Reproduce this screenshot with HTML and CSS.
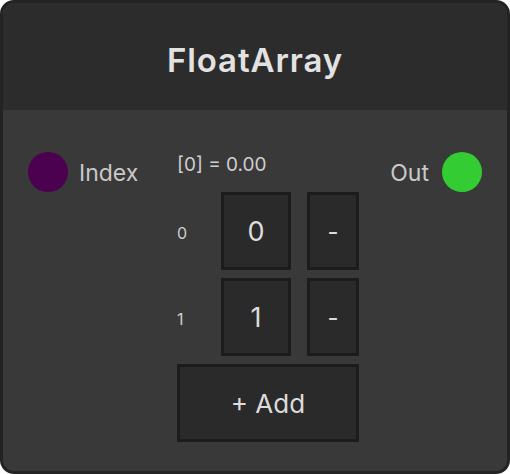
FILE: index.html
```html
<!DOCTYPE html>
<html>
<head>
<meta charset="utf-8">
<link rel="stylesheet" href="styles.css">
</head>
<body>
<div class="node">
  <div class="header">FloatArray</div>
  <div class="body">
    <div class="port port-in">
      <span class="dot dot-in"></span>
      <span class="port-label">Index</span>
    </div>
    <div class="middle">
      <div class="readout">[0] = 0.00</div>
      <div class="row">
        <span class="idx">0</span>
        <div class="box val">0</div>
        <div class="box minus">-</div>
      </div>
      <div class="row">
        <span class="idx">1</span>
        <div class="box val">1</div>
        <div class="box minus">-</div>
      </div>
      <div class="box add">+ Add</div>
    </div>
    <div class="port port-out">
      <span class="port-label">Out</span>
      <span class="dot dot-out"></span>
    </div>
  </div>
</div>
</body>
</html>
```
FILE: styles.css
```css
html, body {
  margin: 0;
  padding: 0;
  background: #ffffff;
}
body {
  font-family: Inter, "Noto Sans", sans-serif;
}
.node {
  width: 510px;
  height: 474px;
  box-sizing: border-box;
  border: 3px solid #232323;
  border-radius: 14px;
  background: #393939;
  overflow: hidden;
  display: flex;
  flex-direction: column;
}
.header {
  height: 107px;
  flex: none;
  background: #2c2c2c;
  color: #e2e2e2;
  font-size: 33px;
  font-weight: 600;
  letter-spacing: 0.9px;
  display: flex;
  align-items: center;
  justify-content: center;
  padding-top: 7px;
  box-sizing: border-box;
}
.body {
  flex: 1;
  display: grid;
  grid-template-columns: 149px 182px 1fr;
  align-items: start;
  padding: 42px 25px 0 25px;
}
.port {
  display: flex;
  align-items: center;
  height: 40px;
  gap: 11px;
}
.port-out {
  gap: 13px;
  justify-self: end;
}
.dot {
  width: 40px;
  height: 40px;
  border-radius: 50%;
  flex: none;
}
.dot-in { background: #4b0050; }
.dot-out { background: #33cc33; }
.port-label {
  color: #c9c9c9;
  font-size: 23px;
  padding-top: 2px;
}
.middle {
  margin-top: 1px;
  display: flex;
  flex-direction: column;
  gap: 8px;
}
.readout {
  color: #cfcfcf;
  font-size: 19px;
  line-height: 24px;
  margin-bottom: 7px;
}
.row {
  display: flex;
  align-items: center;
  height: 78px;
}
.idx {
  width: 44px;
  color: #cfcfcf;
  font-size: 16px;
  padding-top: 4px;
}
.box {
  box-sizing: border-box;
  height: 78px;
  background: #2a2a2a;
  border: 3px solid #1c1c1c;
  color: #dcdcdc;
  display: flex;
  align-items: center;
  justify-content: center;
}
.val {
  width: 70px;
  font-size: 27px;
}
.minus {
  width: 52px;
  margin-left: 16px;
  font-size: 24px;
}
.add {
  width: 182px;
  font-size: 26px;
}
```
